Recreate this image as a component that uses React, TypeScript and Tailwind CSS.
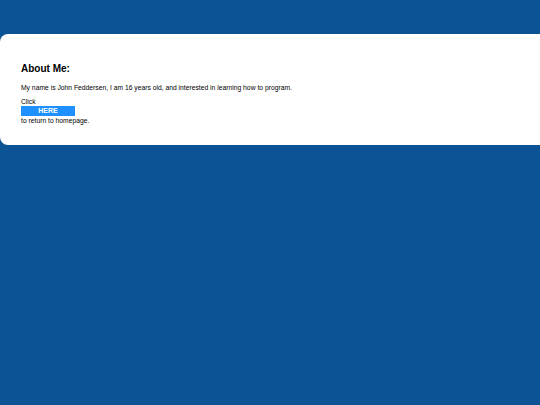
export default function App() {
  return (
    <div className="min-h-[405px] bg-[#0b5394] pt-[34px] font-['Liberation_Sans',Arial,sans-serif]">
      <div className="mr-[-10px] rounded-[8px] bg-white px-[21px] pt-[28px] pb-[20px] text-black">
        <h1 className="text-[10px] font-bold leading-[13px]">About Me:</h1>
        <p className="mt-[8px] text-[6.75px] leading-[9px]">
          My name is John Feddersen, I am 16 years old, and interested in learning how to program.
        </p>
        <div className="mt-[5px] text-[6.75px] leading-[9px]">Click</div>
        <a className="block h-[10px] w-[54px] bg-[#1e90ff] text-center text-[7px] font-bold leading-[10px] text-white">
          HERE
        </a>
        <div className="text-[6.75px] leading-[9px]">to return to homepage.</div>
      </div>
    </div>
  )
}
